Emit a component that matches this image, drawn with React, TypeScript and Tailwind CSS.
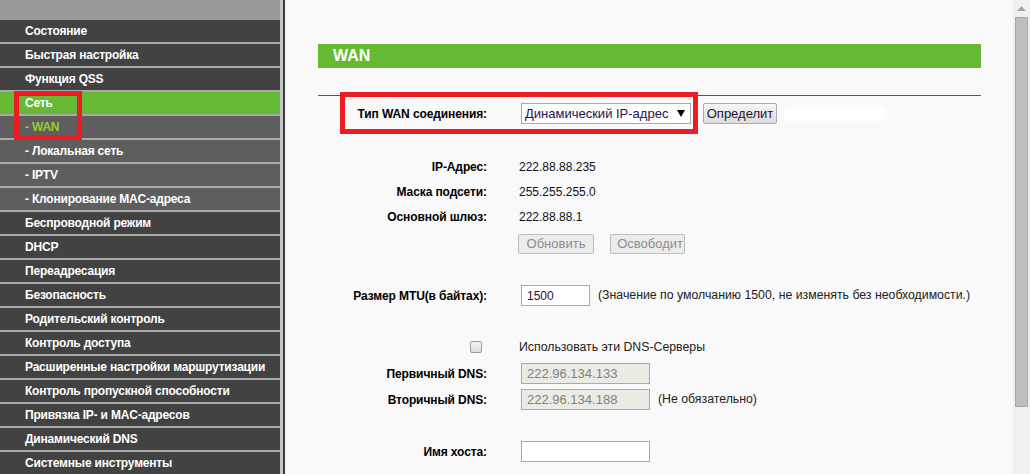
import React from "react";

const items: { t: string; kind: "n" | "s" | "a" | "sa" }[] = [
  { t: "Состояние", kind: "n" },
  { t: "Быстрая настройка", kind: "n" },
  { t: "Функция QSS", kind: "n" },
  { t: "Сеть", kind: "a" },
  { t: "- WAN", kind: "sa" },
  { t: "- Локальная сеть", kind: "s" },
  { t: "- IPTV", kind: "s" },
  { t: "- Клонирование MAC-адреса", kind: "s" },
  { t: "Беспроводной режим", kind: "n" },
  { t: "DHCP", kind: "n" },
  { t: "Переадресация", kind: "n" },
  { t: "Безопасность", kind: "n" },
  { t: "Родительский контроль", kind: "n" },
  { t: "Контроль доступа", kind: "n" },
  { t: "Расширенные настройки маршрутизации", kind: "n" },
  { t: "Контроль пропускной способности", kind: "n" },
  { t: "Привязка IP- и MAC-адресов", kind: "n" },
  { t: "Динамический DNS", kind: "n" },
  { t: "Системные инструменты", kind: "n" },
];

function SideItem({ t, kind }: { t: string; kind: string }) {
  const bg =
    kind === "a" ? "bg-[#66b933]" : kind === "s" || kind === "sa" ? "bg-[#5e5e5e]" : "bg-[#424242]";
  const color = kind === "sa" ? "text-[#9acd32]" : "text-white";
  return (
    <div className={`h-[22px] shrink-0 flex items-center pl-[25px] text-[12px] font-bold tracking-[-0.2px] whitespace-nowrap ${bg} ${color}`}>
      {t}
    </div>
  );
}

function Label({ children }: { children?: React.ReactNode }) {
  return <div className="w-[169px] shrink-0 text-right font-bold text-[12px] tracking-[-0.1px] text-black">{children}</div>;
}

export default function App() {
  return (
    <div className="relative flex w-[1030px] h-[474px] overflow-hidden font-['Liberation_Sans',Arial,sans-serif]">
      {/* Sidebar */}
      <aside className="w-[280px] shrink-0 flex flex-col bg-[#a9a9a9]">
        <div className="h-[20px] shrink-0 bg-[#999999]" />
        <div className="flex flex-col gap-[2px]">
          {items.map((i) => (
            <SideItem key={i.t} t={i.t} kind={i.kind} />
          ))}
        </div>
      </aside>
      <div className="w-[3px] shrink-0 bg-[#c6c6c6]" />
      <div className="w-[2px] shrink-0 bg-[#3a3a3a]" />

      {/* Main content */}
      <main className="flex-1 bg-[#f9f9f9] pl-[33px] flex flex-col text-[12.3px] text-[#111]">
        <div className="mt-[44px] w-[663px] h-[24px] shrink-0 bg-[#66b933] pl-[15px] flex items-center text-white font-bold text-[16px]">
          WAN
        </div>
        <div className="mt-[27px] w-[663px] h-[1px] shrink-0 bg-[#1f7a36]" />

        {/* WAN type */}
        <div className="mt-[7px] h-[21px] shrink-0 flex items-center">
          <Label>Тип WAN соединения:</Label>
          <div className="ml-[34px] w-[170px] h-[21px] bg-white border border-[#a9a9a9] flex items-center justify-between pl-[3px] pr-[5px] text-[13px] text-[#24104f]">
            <span>Динамический IP-адрес</span>
            <svg width="8" height="7" viewBox="0 0 8 7">
              <path d="M0 0H8L4 7Z" fill="#000" />
            </svg>
          </div>
          <div className="ml-[12px] w-[74px] h-[21px] border border-[#acacac] rounded-[2px] bg-gradient-to-b from-[#f6f6f6] to-[#dddddd] flex items-center justify-center text-[13px] text-[#1b1430] overflow-hidden whitespace-nowrap">
            Определит
          </div>
          <div className="ml-[7px] w-[102px] h-[14px] bg-white blur-[2px] rounded-[3px]" />
        </div>

        {/* IP rows */}
        <div className="mt-[30px] h-[25px] shrink-0 flex items-center text-[12px]">
          <Label>IP-Адрес:</Label>
          <div className="ml-[32px]">222.88.88.235</div>
        </div>
        <div className="h-[25px] shrink-0 flex items-center text-[12px]">
          <Label>Маска подсети:</Label>
          <div className="ml-[32px]">255.255.255.0</div>
        </div>
        <div className="h-[25px] shrink-0 flex items-center text-[12px]">
          <Label>Основной шлюз:</Label>
          <div className="ml-[32px]">222.88.88.1</div>
        </div>
        <div className="mt-[5px] h-[20px] shrink-0 flex items-center">
          <div className="w-[169px] shrink-0" />
          <div className="ml-[31px] w-[76px] h-[20px] border border-[#bdbdbd] rounded-[2px] bg-[#ececec] flex items-center justify-center text-[13px] text-[#8d8d8d] overflow-hidden whitespace-nowrap">
            Обновить
          </div>
          <div className="ml-[16px] w-[75px] h-[20px] border border-[#bdbdbd] rounded-[2px] bg-[#ececec] flex items-center justify-end pr-[1px] text-[13px] text-[#8d8d8d] overflow-hidden whitespace-nowrap">
            Освободит
          </div>
        </div>

        {/* MTU */}
        <div className="mt-[31px] h-[21px] shrink-0 flex items-center">
          <Label>Размер MTU(в байтах):</Label>
          <div className="ml-[34px] w-[69px] h-[21px] bg-white border border-[#a9a9a9] flex items-center pl-[5px] text-[12px] text-[#1b1040]">
            1500
          </div>
          <div className="ml-[8px] text-[#222]">(Значение по умолчанию 1500, не изменять без необходимости.)</div>
        </div>

        {/* DNS checkbox */}
        <div className="mt-[31px] h-[20px] shrink-0 flex items-center">
          <div className="w-[169px] shrink-0 flex justify-end pr-[5px]">
            <div className="w-[12px] h-[12px] rounded-[2px] border border-[#9c9c9c] bg-gradient-to-b from-[#f4f4f4] to-[#dcdcdc]" />
          </div>
          <div className="ml-[32px] text-[#222]">Использовать эти DNS-Серверы</div>
        </div>
        <div className="mt-[6px] h-[21px] shrink-0 flex items-center">
          <Label>Первичный DNS:</Label>
          <div className="ml-[34px] w-[129px] h-[21px] bg-[#ebebe4] border border-[#a9a9a9] flex items-center pl-[5px] text-[13px] text-[#808080]">
            222.96.134.133
          </div>
        </div>
        <div className="mt-[5px] h-[21px] shrink-0 flex items-center">
          <Label>Вторичный DNS:</Label>
          <div className="ml-[34px] w-[129px] h-[21px] bg-[#ebebe4] border border-[#a9a9a9] flex items-center pl-[5px] text-[13px] text-[#808080]">
            222.96.134.188
          </div>
          <div className="ml-[8px] text-[#222]">(Не обязательно)</div>
        </div>

        {/* Hostname */}
        <div className="mt-[31px] h-[21px] shrink-0 flex items-center">
          <Label>Имя хоста:</Label>
          <div className="ml-[34px] w-[129px] h-[21px] bg-white border border-[#a9a9a9]" />
        </div>
      </main>

      {/* Scrollbar */}
      <div className="w-[17px] shrink-0 bg-[#f0f0f0] flex flex-col items-center">
        <svg className="mt-[6px]" width="9" height="5" viewBox="0 0 9 5">
          <path d="M0 5L4.5 0L9 5Z" fill="#a3a3a3" />
        </svg>
        <div className="mt-[6px] w-[13px] h-[390px] bg-[#bebebe] border border-[#a9a9a9]" />
      </div>

      {/* Red annotation boxes */}
      <div className="absolute left-[14px] top-[91px] w-[68px] h-[49px] border-[5px] border-[#ed1c24]" />
      <div className="absolute left-[340px] top-[92px] w-[358px] h-[42px] border-[5px] border-[#ed1c24]" />
    </div>
  );
}
